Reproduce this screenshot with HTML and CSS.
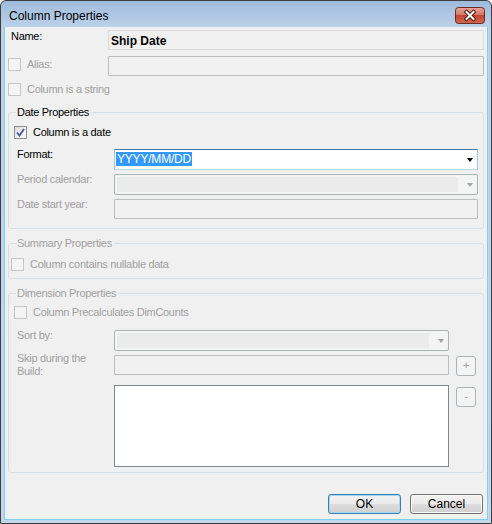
FILE: index.html
```html
<!DOCTYPE html>
<html lang="en">
<head>
    <meta charset="UTF-8">
    <title>Column Properties</title>
    <link rel="stylesheet" href="styles.css">
</head>
<body>
    <div class="window">
        <!-- Title bar -->
        <div class="titlebar">
            <span class="title">Column Properties</span>
            <div class="close-btn">
                <svg width="30" height="17" viewBox="0 0 30 17">
                    <defs>
                        <linearGradient id="closeRed" x1="0" y1="0" x2="0" y2="1">
                            <stop offset="0" stop-color="#e8a598"/>
                            <stop offset="0.45" stop-color="#d5796a"/>
                            <stop offset="0.5" stop-color="#c3442f"/>
                            <stop offset="1" stop-color="#d26a52"/>
                        </linearGradient>
                    </defs>
                    <rect x="0.5" y="0.5" width="29" height="16" rx="3" fill="url(#closeRed)" stroke="#6b2a20"/>
                    <path d="M11.5 5 L18.5 12 M18.5 5 L11.5 12" stroke="#4b1a12" stroke-width="4" stroke-linecap="square"/>
                    <path d="M11.5 5 L18.5 12 M18.5 5 L11.5 12" stroke="#ffffff" stroke-width="2" stroke-linecap="square"/>
                </svg>
            </div>
        </div>

        <div class="client">
            <!-- Name / alias -->
            <div class="row name-row">
                <span class="label name-label">Name:</span>
                <div class="textbox readonly">Ship Date</div>
            </div>
            <div class="row alias-row">
                <div class="check-item disabled">
                    <span class="checkbox"></span>Alias:
                </div>
                <div class="textbox disabled"></div>
            </div>
            <div class="check-item disabled string-row">
                <span class="checkbox"></span>Column is a string
            </div>

            <!-- Date Properties -->
            <fieldset class="group date-group">
                <legend>Date Properties</legend>
                <div class="check-item">
                    <span class="checkbox checked">
                        <svg width="11" height="11" viewBox="0 0 11 11">
                            <path d="M2 5.5 L4.5 8.5 L9 2" fill="none" stroke="#3f5a9e" stroke-width="1.8"/>
                        </svg>
                    </span>Column is a date
                </div>
                <div class="field-row format-row">
                    <span class="label">Format:</span>
                    <div class="combo focused">
                        <span class="combo-text"><span class="selected">YYYY/MM/DD</span></span>
                        <span class="arrow"></span>
                    </div>
                </div>
                <div class="field-row period-row">
                    <span class="label disabled-text">Period calendar:</span>
                    <div class="combo disabled">
                        <span class="combo-text"></span>
                        <span class="arrow"></span>
                    </div>
                </div>
                <div class="field-row start-row">
                    <span class="label disabled-text">Date start year:</span>
                    <div class="textbox disabled"></div>
                </div>
            </fieldset>

            <!-- Summary Properties -->
            <fieldset class="group summary-group disabled-text">
                <legend>Summary Properties</legend>
                <div class="check-item disabled nullable">
                    <span class="checkbox"></span>Column contains nullable data
                </div>
            </fieldset>

            <!-- Dimension Properties -->
            <fieldset class="group dim-group disabled-text">
                <legend>Dimension Properties</legend>
                <div class="check-item disabled">
                    <span class="checkbox"></span>Column Precalculates DimCounts
                </div>
                <div class="dim-row sort-row">
                    <span class="label">Sort by:</span>
                    <div class="combo disabled">
                        <span class="combo-text"></span>
                        <span class="arrow"></span>
                    </div>
                </div>
                <div class="dim-row skip-row">
                    <span class="label skip-label">Skip during the Build:</span>
                    <div class="textbox disabled"></div>
                    <div class="small-btn">+</div>
                </div>
                <div class="dim-row list-row">
                    <span></span>
                    <div class="listbox"></div>
                    <div class="small-btn">-</div>
                </div>
            </fieldset>

            <div class="buttons">
                <button class="btn default">OK</button>
                <button class="btn">Cancel</button>
            </div>
        </div>
    </div>
</body>
</html>
```

FILE: styles.css
```css
* {
    margin: 0;
    padding: 0;
    box-sizing: border-box;
}

body {
    width: 492px;
    height: 524px;
    overflow: hidden;
    font-family: "Liberation Sans", Arial, sans-serif;
    font-size: 11px;
    line-height: 13px;
    letter-spacing: -0.3px;
    color: #000;
    background: #fff;
}

.window {
    width: 492px;
    height: 524px;
    display: flex;
    flex-direction: column;
    border: 1px solid #3e3e3e;
    border-radius: 6px 6px 0 0;
    padding: 0 3px 3px;
    background: linear-gradient(#9fbbdb 0, #bcd1ea 26px, #c5d6ea 100%);
}

.titlebar {
    height: 26px;
    display: flex;
    justify-content: space-between;
    align-items: flex-start;
    padding-left: 5px;
}

.title {
    font-size: 12px;
    line-height: 14px;
    letter-spacing: 0;
    padding-top: 8px;
    color: #000;
}

.close-btn {
    margin-top: 6px;
    margin-right: 3px;
    height: 17px;
}

.close-btn svg {
    display: block;
}

.client {
    flex: 1;
    background: #f0f0f0;
    border: 1px solid #7dd1f0;
    border-top: none;
    padding: 3px 3px 0 3px;
}

/* rows */
.row {
    display: grid;
    grid-template-columns: 100px 1fr;
    height: 20px;
}

.alias-row {
    margin-top: 6px;
}

.alias-row .check-item {
    margin-top: 2px;
}

.string-row {
    margin-top: 7px;
}

.name-label {
    padding-left: 3px;
}

.label {
    white-space: nowrap;
}

.disabled-text,
.disabled {
    color: #a0a0a0;
}

/* checkbox */
.check-item {
    display: flex;
    align-items: flex-start;
    gap: 6px;
    height: 13px;
}

.checkbox {
    width: 13px;
    height: 13px;
    flex: none;
    border: 1px solid #8e8f8f;
    background: linear-gradient(135deg, #dcdcdc, #fbfbfb);
    display: flex;
    align-items: center;
    justify-content: center;
}

.check-item.disabled .checkbox {
    border-color: #c6c6c6;
    background: #f4f4f4;
}

.checkbox svg {
    display: block;
}

/* text boxes */
.textbox {
    height: 20px;
    border: 1px solid #bcbcbc;
    border-radius: 1px;
    background: #f0f0f0;
}

.textbox.readonly {
    border-color: #dadada;
    font-size: 12px;
    font-weight: bold;
    letter-spacing: 0;
    line-height: 14px;
    padding: 3px 2px 0;
}

/* group boxes */
.group {
    margin: 0;
    min-width: 0;
    border: 1px solid #d5dfe5;
    border-radius: 3px;
    padding: 7px 5px 9px 5px;
}

.group legend {
    margin-left: 2px;
    padding: 0 2px 0 1px;
    line-height: 13px;
}

.date-group {
    margin-top: 10px;
}

.summary-group {
    margin-top: 8px;
    padding-top: 8px;
    padding-bottom: 7px;
}

.nullable {
    margin-left: -3px;
}

.dim-group {
    margin-top: 8px;
    padding-top: 6px;
    padding-bottom: 5px;
}

.field-row {
    display: grid;
    grid-template-columns: 100px 1fr;
    margin-top: 4px;
}

.field-row .label,
.dim-row .label {
    padding-left: 3px;
    margin-top: -1px;
}

.format-row {
    margin-top: 10px;
}

/* combo boxes */
.combo {
    height: 21px;
    border: 1px solid #adb2b5;
    border-radius: 2px;
    display: flex;
    align-items: stretch;
    background: #f4f4f4;
}

.combo.focused {
    background: #fff;
    border-color: #3d7bad #a4c9e3 #b7d9ed #a4c9e3;
    border-radius: 0;
}

.combo-text {
    flex: 1;
    margin: 2px 0 3px 1px;
    font-size: 12px;
    line-height: 14px;
    letter-spacing: -0.2px;
}

.combo.disabled .combo-text {
    background: #ebebeb;
    margin: 2px 2px 2px 2px;
}

.selected {
    display: inline-block;
    background: #3399ff;
    color: #fff;
    padding: 0 1px 0 1px;
}

.arrow {
    width: 17px;
    display: flex;
    align-items: center;
    justify-content: center;
}

.arrow::before {
    content: "";
    border-left: 3.5px solid transparent;
    border-right: 3.5px solid transparent;
    border-top: 4px solid #000;
    margin-left: 2px;
}

.combo.disabled .arrow::before {
    border-top-color: #a3a3a3;
}

/* dimension rows */
.dim-row {
    display: grid;
    grid-template-columns: 100px 335px 27px;
}

.dim-row .small-btn {
    margin-left: 7px;
}

.sort-row {
    margin-top: 11px;
}

.skip-row {
    margin-top: 4px;
    height: 20px;
}

.skip-row .label {
    white-space: normal;
    margin-top: -3px;
    padding-right: 20px;
}

.skip-row .small-btn {
    margin-top: 1px;
}

.list-row {
    margin-top: 10px;
}

.list-row .small-btn {
    margin-top: 2px;
}

.listbox {
    height: 82px;
    border: 1px solid #828790;
    background: #fff;
}

.small-btn {
    width: 20px;
    height: 20px;
    border: 1px solid #adb2b5;
    border-radius: 3px;
    background: #f4f4f4;
    color: #a0a0a0;
    font-size: 11px;
    line-height: 17px;
    text-align: center;
}

/* dialog buttons */
.buttons {
    display: flex;
    justify-content: flex-end;
    gap: 9px;
    margin-top: 21px;
    padding-right: 1px;
}

.btn {
    width: 73px;
    height: 20px;
    border: 1px solid #707070;
    border-radius: 3px;
    background: linear-gradient(#f2f2f2 0, #ebebeb 50%, #dddddd 50%, #cfcfcf 100%);
    font-family: "Liberation Sans", Arial, sans-serif;
    font-size: 12px;
    letter-spacing: 0;
    color: #000;
    box-shadow: inset 0 0 0 1px #fcfcfc;
}

.btn.default {
    border-color: #3c7fb1;
    box-shadow: inset 0 0 0 1px #9fd8f4;
}
```
